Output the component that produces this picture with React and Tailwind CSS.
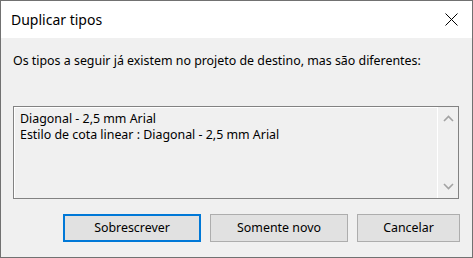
export default function App() {
  const font = { fontFamily: '"Noto Sans", "Segoe UI", sans-serif' };
  return (
    <div className="w-[473px] h-[258px] border border-[#717171] flex flex-col bg-[#f0f0f0] text-black" style={font}>
      <div className="h-[37px] bg-white flex items-center justify-between shrink-0">
        <span className="ml-[10px] text-[14px] leading-none">Duplicar tipos</span>
        <svg width="13" height="13" viewBox="0 0 13 13" className="mr-[14px]">
          <path d="M0.5 0.5 L12.5 12.5 M12.5 0.5 L0.5 12.5" stroke="#000" strokeWidth="1" fill="none" />
        </svg>
      </div>
      <div className="flex-1 flex flex-col px-[12px]">
        <div className="mt-[15px] text-[12.4px] leading-[16px] h-[16px]">
          Os tipos a seguir já existem no projeto de destino, mas são diferentes:
        </div>
        <div className="mt-[37px] w-[446px] h-[93px] border border-[#828282] flex">
          <div className="flex-1 border-t border-l border-white text-[12.4px] leading-[16px] pl-[5px] pt-[3px]">
            <div>Diagonal - 2,5 mm Arial</div>
            <div>Estilo de cota linear : Diagonal - 2,5 mm Arial</div>
          </div>
          <div className="w-[21px] border-l border-white flex flex-col items-center justify-between py-[8px]">
            <svg width="11" height="7" viewBox="0 0 11 7">
              <path d="M1 6 L5.5 1.5 L10 6" stroke="#a3a3a3" strokeWidth="1.6" fill="none" />
            </svg>
            <svg width="11" height="7" viewBox="0 0 11 7">
              <path d="M1 1 L5.5 5.5 L10 1" stroke="#a3a3a3" strokeWidth="1.6" fill="none" />
            </svg>
          </div>
        </div>
        <div className="mt-[15px] flex gap-[9px] pl-[50px] text-[12.4px]">
          <button className="w-[138px] h-[28px] border-2 border-[#0078d7] bg-[#e1e1e1] flex items-center justify-center">Sobrescrever</button>
          <button className="w-[138px] h-[28px] border border-[#adadad] bg-[#e1e1e1] flex items-center justify-center">Somente novo</button>
          <button className="w-[103px] h-[28px] border border-[#adadad] bg-[#e1e1e1] flex items-center justify-center">Cancelar</button>
        </div>
      </div>
    </div>
  );
}
